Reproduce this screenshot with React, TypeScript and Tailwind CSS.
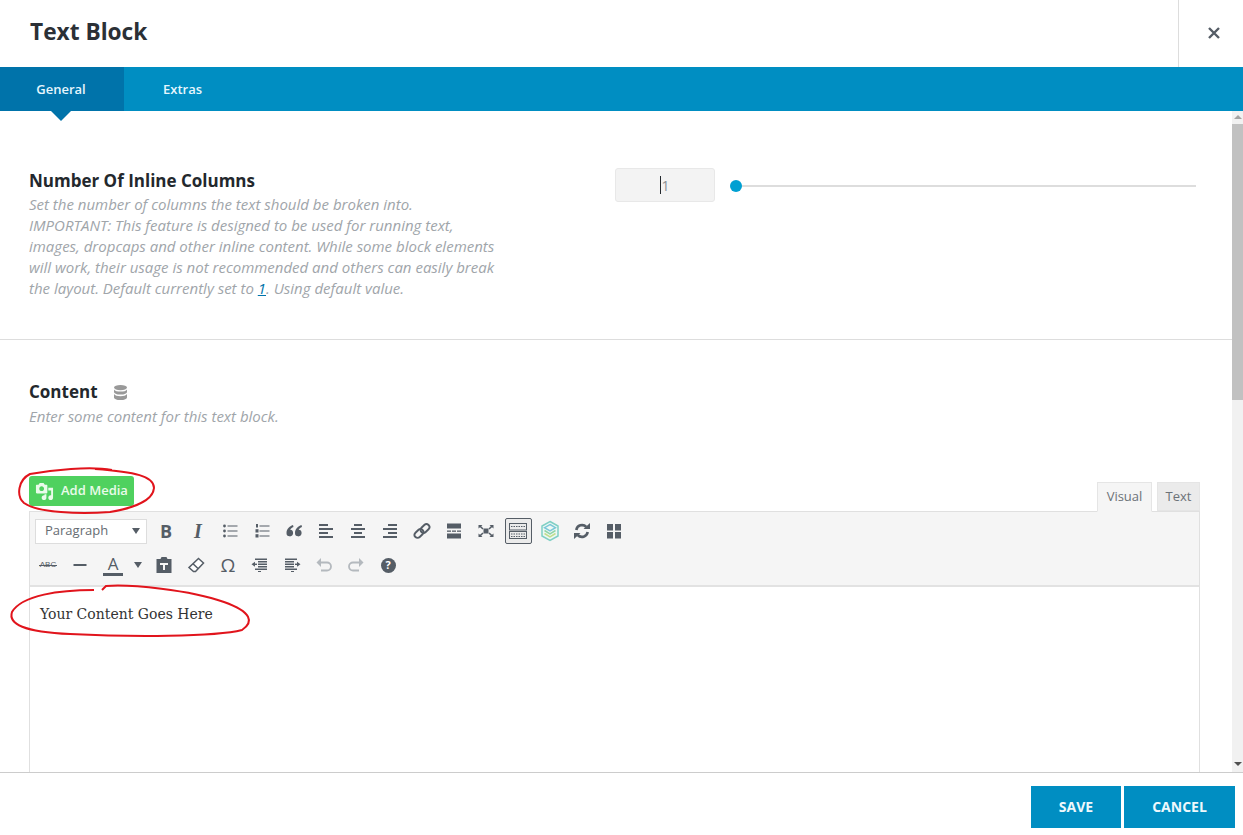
import React from "react";

const C = "#555d66";
function Ico({ children, size = 20 }: { children: React.ReactNode; size?: number }) {
  return (
    <svg width={size} height={size} viewBox="0 0 20 20" fill={C} stroke="none">
      {children}
    </svg>
  );
}
function Btn({ children, active }: { children: React.ReactNode; active?: boolean }) {
  return (
    <div className="w-8 h-[28px] flex items-center justify-center">
      {active ? (
        <div className="w-[27px] h-[26px] border border-[#555d66] rounded-[2px] bg-[#ebebeb] flex items-center justify-center">
          {children}
        </div>
      ) : (
        children
      )}
    </div>
  );
}

export default function App() {
  return (
    <div className="w-[1243px] h-[835px] bg-white flex flex-col overflow-hidden relative font-['Open_Sans',sans-serif] text-[#23282d]">
      <header className="h-[67px] shrink-0 flex items-center justify-between">
        <h1 className="pl-[30px] pb-[3px] text-[22.7px] leading-none font-bold text-[#2b3036]">Text Block</h1>
        <div className="w-[65px] h-full pl-[6px] pb-[1px] border-l border-[#dddddd] flex items-center justify-center">
          <svg width="12" height="12" viewBox="0 0 12 12" stroke="#555d66" strokeWidth="2.4">
            <path d="M1 1 L11 11 M11 1 L1 11" />
          </svg>
        </div>
      </header>

      <nav className="h-[44px] shrink-0 bg-[#008ec2] flex text-[13px] font-semibold text-[#e6f6fd] relative">
        <div className="w-[124px] bg-[#0073aa] flex items-center justify-center pr-[2px] pt-[1px] relative">
          General
          <div className="absolute left-[51px] top-full w-0 h-0 border-l-[10px] border-r-[10px] border-t-[10px] border-l-transparent border-r-transparent border-t-[#0073aa]" />
        </div>
        <div className="w-[117px] pt-[1px] flex items-center justify-center">Extras</div>
      </nav>

      <main className="flex-1 min-h-0 flex">
        <div className="flex-1 min-w-0 overflow-hidden">
          <section className="h-[229px] border-b border-[#dddddd] pt-[59px] pl-[29px] pr-[36px] flex">
            <div className="w-[586px] shrink-0">
              <h2 className="text-[17px] leading-[22px] font-bold text-[#23282d]">Number Of Inline Columns</h2>
              <p className="w-[500px] mt-[2px] text-[15px] leading-[21px] italic text-[#a0a5aa]">
                Set the number of columns the text should be broken into.
                <br />
                IMPORTANT: This feature is designed to be used for running text,
                <br />
                images, dropcaps and other inline content. While some block elements
                <br />
                will work, their usage is not recommended and others can easily break
                <br />
                the layout. Default currently set to{" "}
                <span className="text-[#0073aa] underline">1</span>. Using default value.
              </p>
            </div>
            <div className="flex-1 flex items-start">
              <div className="w-[100px] h-[34px] mt-[-2px] shrink-0 bg-[#f3f3f3] border border-[#e8e8e8] rounded-[3px] flex items-center justify-center text-[14px] text-[#8a8f94]">
                <span className="w-px h-[18px] bg-[#23282d]" />1
              </div>
              <div className="flex-1 ml-[15px] mt-[10px] flex items-center">
                <div className="w-3 h-3 rounded-full bg-[#00a0d2] shrink-0" />
                <div className="flex-1 h-[2px] mt-[-1px] bg-[#dddddd]" />
              </div>
            </div>
          </section>

          <section className="pl-[29px] pr-[32px] pt-[40px]">
            <div className="flex items-center h-[24px]">
              <h2 className="text-[17px] leading-[22px] font-bold text-[#23282d]">Content</h2>
              <svg className="ml-[16px]" width="13" height="15" viewBox="0 0 13 15" fill="#999999">
                <ellipse cx="6.5" cy="2.6" rx="6.5" ry="2.6" />
                <path d="M0 4.4c1 1.5 3.4 2.2 6.5 2.2S12 5.900 13 4.400V7c0 1.400-2.900 2.600-6.500 2.600S0 8.400 0 7z" />
                <path d="M0 9c1 1.500 3.400 2.200 6.500 2.200S12 10.500 13 9v3.400C13 13.800 10.100 15 6.500 15S0 13.800 0 12.400z" />
              </svg>
            </div>
            <p className="text-[15px] leading-[24px] italic text-[#a0a5aa]">Enter some content for this text block.</p>

            <div className="mt-[48px] flex items-end justify-between h-[35px]">
              <div className="w-[105px] h-[30px] mb-[5px] bg-[#4fd15f] rounded-[3px] flex items-center pl-[6px] text-[13px] font-semibold text-[#eafbea]">
                <svg width="19" height="19" viewBox="0 0 20 20" fill="#eafbea">
                  <path fillRule="evenodd" d="M13 11V4c0-.55-.45-1-1-1h-1.670L9 1H5L3.670 3H2c-.55 0-1 .45-1 1v7c0 .55.45 1 1 1h10c.55 0 1-.45 1-1zM7 4.500c1.380 0 2.500 1.120 2.500 2.500S8.380 9.500 7 9.500 4.500 8.380 4.500 7 5.620 4.500 7 4.500zM14 6h5v10.500c0 1.380-1.120 2.500-2.500 2.500S14 17.880 14 16.500s1.120-2.500 2.500-2.500c.17 0 .34.020.5.050V9h-3V6zm-4 8.050V13h2v3.500c0 1.380-1.120 2.500-2.500 2.500S7 17.880 7 16.500 8.120 14 9.500 14c.17 0 .34.020.5.050z" />
                </svg>
                <span className="ml-[7px]">Add Media</span>
              </div>
              <div className="flex items-end text-[13px] text-[#6c7278]">
                <div className="w-[55px] h-[30px] mb-[-1px] bg-[#f5f5f5] border border-[#e5e5e5] border-b-[#f5f5f5] flex items-center justify-center z-10">Visual</div>
                <div className="w-[43px] h-[29px] ml-[5px] bg-[#ebebeb] border border-[#e5e5e5] flex items-center justify-center">Text</div>
              </div>
            </div>

            <div className="border border-[#e0e0e0] border-b-0">
              <div className="h-[75px] bg-[#f5f5f5] border-b-2 border-[#e2e2e2] pl-[2px] pt-[4px]">
                <div className="flex items-center h-[30px]">
                  <div className="ml-[3px] w-[112px] h-[25px] bg-white border border-[#dddddd] flex items-center justify-between pl-[9px] pr-[6px] text-[13px] text-[#666c72]">
                    Paragraph
                    <span className="w-0 h-0 border-l-[4px] border-r-[4px] border-t-[6px] border-l-transparent border-r-transparent border-t-[#555d66]" />
                  </div>
                  <div className="ml-[3px] flex">
                    <Btn><span className="font-bold text-[18px] text-[#555d66]">B</span></Btn>
                    <Btn><span className="font-['Liberation_Serif',serif] italic font-bold text-[20px] text-[#555d66]">I</span></Btn>
                    <Btn><Ico><circle cx="4.500" cy="5" r="1.400" /><circle cx="4.500" cy="10" r="1.400" /><circle cx="4.500" cy="15" r="1.400" /><rect x="7.500" y="4.500" width="10" height="1" /><rect x="7.500" y="9.500" width="10" height="1" /><rect x="7.500" y="14.500" width="10" height="1" /></Ico></Btn>
                    <Btn><Ico><rect x="4" y="3" width="2" height="3.500" /><rect x="3.500" y="8.200" width="3" height="3.300" /><rect x="3.500" y="13.200" width="3" height="3.300" /><rect x="7.500" y="4.500" width="10" height="1" /><rect x="7.500" y="9.500" width="10" height="1" /><rect x="7.500" y="14.500" width="10" height="1" /></Ico></Btn>
                    <Btn><Ico><path d="M9 4C5.500 5.200 2.500 8 2.500 12a3.300 3.300 0 1 0 3.700-3.200c.4-1.100 1.700-2 3.300-2.800zM17.500 4c-3.500 1.200-6.500 4-6.500 8a3.300 3.300 0 1 0 3.700-3.200c.4-1.100 1.700-2 3.300-2.800z" /></Ico></Btn>
                    <Btn><Ico><path d="M12 5V3H3v2h9zm5 4V7H3v2h14zm-5 4v-2H3v2h9zm5 4v-2H3v2h14z" /></Ico></Btn>
                    <Btn><Ico><path d="M14 5V3H6v2h8zm3 4V7H3v2h14zm-3 4v-2H6v2h8zm3 4v-2H3v2h14z" /></Ico></Btn>
                    <Btn><Ico><path d="M17 5V3H8v2h9zm0 4V7H3v2h14zm0 4v-2H8v2h9zm0 4v-2H3v2h14z" /></Ico></Btn>
                    <Btn>
                      <svg width="20" height="20" viewBox="0 0 20 20" fill="none" stroke={C} strokeWidth="1.900">
                        <rect x="2" y="9.500" width="10" height="6" rx="3" transform="rotate(-45 7 12.500)" />
                        <rect x="8" y="4.500" width="10" height="6" rx="3" transform="rotate(-45 13 7.500)" />
                      </svg>
                    </Btn>
                    <Btn><Ico><rect x="3" y="2.500" width="14" height="5" /><rect x="3" y="12.500" width="14" height="5" /><rect x="3" y="9.500" width="4" height="1.300" /><rect x="8" y="9.500" width="4" height="1.300" /><rect x="13" y="9.500" width="4" height="1.300" /></Ico></Btn>
                    <Btn><Ico><rect x="7.500" y="7.500" width="5" height="5" /><path d="M2.500 4h4L5.200 5.300 7.500 7.500 6.500 8.500 4 6.200 2.500 7.500zM17.500 4h-4l1.300 1.300-2.300 2.200 1 1L16 6.200l1.500 1.300zM2.500 16h4l-1.300-1.300 2.300-2.200-1-1L4 13.800l-1.500-1.300zM17.500 16h-4l1.300-1.300-2.300-2.200 1-1 2.500 2.300 1.500-1.300z" /></Ico></Btn>
                    <Btn active>
                      <svg width="18" height="16" viewBox="0 0 18 16" fill="none" stroke={C}>
                        <rect x="0.500" y="0.500" width="17" height="6.500" />
                        <rect x="0.500" y="8.500" width="17" height="7" />
                        <path d="M2 3.500h14M2 11h14M2 13.500h14" strokeDasharray="1.500 1" strokeWidth="1.200" />
                      </svg>
                    </Btn>
                    <Btn>
                      <svg width="20" height="22" viewBox="0 0 20 22" fill="none" strokeWidth="1.500">
                        <path d="M10 1.500 L18 6 V16 L10 20.500 L2 16 V6 Z" stroke="#7fcfc4" fill="#eef8f4" />
                        <path d="M10 4.500 L15.500 7.700 L10 11 L4.500 7.700 Z" stroke="#7cc8d8" />
                        <path d="M4.500 10.500 L10 13.800 L15.500 10.500" stroke="#8fd4a8" />
                        <path d="M4.500 13.500 L10 16.800 L15.500 13.500" stroke="#c0de8c" />
                      </svg>
                    </Btn>
                    <Btn>
                      <svg width="20" height="20" viewBox="0 0 20 20" fill="none" stroke={C} strokeWidth="2.600">
                        <path d="M4.300 9a5.800 5.800 0 0 1 10-3M15.700 11a5.800 5.800 0 0 1-10 3" />
                        <path d="M11.500 8h6.500V2z M8.500 12H2v6z" fill={C} stroke="none" />
                      </svg>
                    </Btn>
                    <Btn><Ico><rect x="3" y="3" width="6" height="6.500" /><rect x="11" y="3" width="6" height="6.500" /><rect x="3" y="11" width="6" height="6.500" /><rect x="11" y="11" width="6" height="6.500" /></Ico></Btn>
                  </div>
                </div>
                <div className="flex items-center h-[28px] mt-[5px]">
                  <Btn>
                    <span className="relative font-['Liberation_Sans',sans-serif] text-[8px] text-[#555d66]">
                      ABC
                      <span className="absolute left-[-1px] right-[-1px] top-[6px] h-px bg-[#555d66]" />
                    </span>
                  </Btn>
                  <Btn><Ico><rect x="3.500" y="9" width="13" height="2" /></Ico></Btn>
                  <div className="w-[52px] h-[28px] flex items-center pl-[7px]">
                    <div className="flex flex-col items-center w-[20px]">
                      <span className="text-[17px] leading-[17px] text-[#555d66]">A</span>
                      <span className="w-[20px] h-[3px] bg-[#555d66] mt-[1px]" />
                    </div>
                    <span className="ml-[11px] w-0 h-0 border-l-[4px] border-r-[4px] border-t-[6px] border-l-transparent border-r-transparent border-t-[#555d66]" />
                  </div>
                  <Btn><Ico><path d="M2.500 4h4L7.500 2h5l1 2h4v14h-15z" /><rect x="6" y="8" width="8" height="2" fill="#f5f5f5" /><rect x="9" y="8" width="2" height="7" fill="#f5f5f5" /></Ico></Btn>
                  <Btn>
                    <svg width="20" height="20" viewBox="0 0 20 20" fill="none" stroke={C} strokeWidth="1.500">
                      <path d="M12.500 3.500 L17.500 8 L9.500 16.500 H7.500 L3 12.500 Z" fill="#ffffff" />
                      <path d="M7 8.800 L12 13.500" />
                    </svg>
                  </Btn>
                  <Btn><span className="text-[19px] leading-none text-[#555d66]">Ω</span></Btn>
                  <Btn><Ico><rect x="5" y="3.500" width="12" height="1.500" /><rect x="8" y="6" width="9" height="1.500" /><rect x="8" y="8.500" width="9" height="1.500" /><rect x="8" y="11" width="9" height="1.500" /><rect x="5" y="13.500" width="12" height="1.500" /><rect x="8" y="16" width="3" height="1" /><path d="M1.500 9.300 L5 6.800 V11.800 Z" /><rect x="4" y="8.600" width="3" height="1.400" /></Ico></Btn>
                  <Btn><Ico><rect x="3" y="3.500" width="12" height="1.500" /><rect x="3" y="6" width="9" height="1.500" /><rect x="3" y="8.500" width="9" height="1.500" /><rect x="3" y="11" width="9" height="1.500" /><rect x="3" y="13.500" width="12" height="1.500" /><rect x="9" y="16" width="3" height="1" /><path d="M18.500 9.300 L15 6.800 V11.800 Z" /><rect x="13" y="8.600" width="3" height="1.400" /></Ico></Btn>
                  <Btn><svg width="20" height="20" viewBox="0 0 20 20" fill="none" stroke="#b4b9be" strokeWidth="1.800"><path d="M5 7.500h8a4 4 0 0 1 0 8H7" /><path d="M2.500 7.500l4.500-4.500v9z" fill="#b4b9be" stroke="none" /></svg></Btn>
                  <Btn><svg width="20" height="20" viewBox="0 0 20 20" fill="none" stroke="#b4b9be" strokeWidth="1.800"><path d="M15 7.500H7a4 4 0 0 0 0 8h6" /><path d="M17.500 7.500l-4.500-4.500v9z" fill="#b4b9be" stroke="none" /></svg></Btn>
                  <Btn>
                    <span className="w-[15px] h-[15px] rounded-full bg-[#555d66] text-white text-[11px] font-bold flex items-center justify-center">?</span>
                  </Btn>
                </div>
              </div>
              <div className="h-[200px] bg-white pl-[10px] pt-[15px] font-['DejaVu_Serif',serif] text-[14px] leading-[24px] text-[#333333]">
                Your Content Goes Here
              </div>
            </div>
          </section>
        </div>

        <div className="w-[11px] shrink-0 bg-[#f1f1f1] flex flex-col items-center">
          <span className="mt-[4px] w-0 h-0 border-l-[4px] border-r-[4px] border-b-[4px] border-l-transparent border-r-transparent border-b-[#a3a3a3]" />
          <div className="w-full h-[276px] mt-[5px] bg-[#c1c1c1]" />
          <span className="mt-auto mb-[6px] w-0 h-0 border-l-[4px] border-r-[4px] border-t-[4px] border-l-transparent border-r-transparent border-t-[#505050]" />
        </div>
      </main>

      <footer className="h-[63px] shrink-0 bg-white border-t border-[#cccccc] flex justify-end gap-[3px] pr-[8px] pt-[13px] text-[14px] font-bold text-[#eef8fc]">
        <div className="w-[90px] h-[42px] pb-[2px] bg-[#008ec2] flex items-center justify-center">SAVE</div>
        <div className="w-[111px] h-[42px] pb-[2px] bg-[#008ec2] flex items-center justify-center">CANCEL</div>
      </footer>

      <svg className="absolute left-0 top-0 pointer-events-none" width="1243" height="835" fill="none" stroke="#e1141c" strokeWidth="2">
        <path d="M112 470 C90 466 52 470 30 474 C18 480 16 496 24 503 C38 513 80 514 110 512 C135 508 153 500 154 488 C154 476 135 472 95 469" />
        <path d="M94 590 C60 590 22 595 12 612 C8 624 24 632 70 634 C130 637 215 637 242 630 C254 622 252 612 224 602 C190 590 130 584 106 586 L102 590" />
      </svg>
    </div>
  );
}
